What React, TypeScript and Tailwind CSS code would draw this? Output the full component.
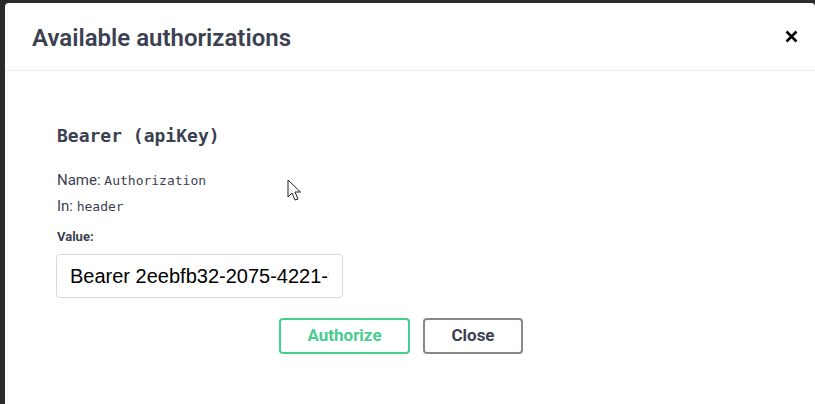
import React from "react";

const sans = "font-['Roboto','Noto_Sans',sans-serif]";
const mono = "font-['DejaVu_Sans_Mono','Liberation_Mono',monospace]";

const CloseIcon: React.FC = () => (
  <svg width="13" height="13" viewBox="0 0 13 13" aria-hidden="true">
    <path d="M1.5 1.5 L11.5 11.5 M11.5 1.5 L1.5 11.5" stroke="#000" strokeWidth="2.6" strokeLinecap="butt" />
  </svg>
);

const Cursor: React.FC = () => (
  <svg width="16" height="24" viewBox="0 0 16 24" aria-hidden="true">
    <path
      d="M1 1 L1 18 L5 14 L8 21 L11 20 L8 13 L13.5 13 Z"
      fill="#fff"
      stroke="#222"
      strokeWidth="1"
      strokeLinejoin="miter"
    />
  </svg>
);

export default function App() {
  return (
    <div className="w-[815px] h-[404px] bg-[#2b2b2b] pl-[5px] pt-[3px] overflow-hidden">
      <div className={`relative w-[810px] h-[410px] bg-white rounded-[4px] flex flex-col ${sans}`}>
        <div className="h-[68px] shrink-0 border-b border-[#ebebeb] flex items-center justify-between pl-[27px] pr-[17px]">
          <h3 className="text-[24px] font-semibold text-[#3b4151] leading-none mt-[2px]">
            Available authorizations
          </h3>
          <button type="button" className="w-[13px] h-[13px] flex items-center justify-center -mt-[1px]" aria-label="Close">
            <CloseIcon />
          </button>
        </div>

        <div className="flex flex-col pl-[52px] pr-[54px] pt-[53px]">
          <h4 className={`${mono} text-[18px] font-bold text-[#3b4151] leading-[24px]`}>
            Bearer (apiKey)
          </h4>
          <div className="mt-[22px] text-[15px] text-[#3b4151] leading-[20px] flex items-baseline">
            Name:&nbsp;<code className={`${mono} text-[13px]`}>Authorization</code>
          </div>
          <div className="mt-[5px] text-[15px] text-[#3b4151] leading-[20px] flex items-baseline">
            In:&nbsp;<code className={`${mono} text-[13px]`}>header</code>
          </div>
          <label className="mt-[12px] text-[13px] font-bold text-[#3b4151] leading-[16px]">Value:</label>
          <input
            type="text"
            readOnly
            value="Bearer 2eebfb32-2075-4221-9c1d-7f3a0b8e6d21"
            className="mt-[9px] -ml-[1px] w-[287px] h-[44px] border border-[#d9d9d9] rounded-[4px] px-[13px] text-[20px] text-black font-['Liberation_Sans',Arial,sans-serif] outline-none"
          />
          <div className="mt-[20px] flex justify-center gap-[13px]">
            <button
              type="button"
              className="shrink-0 w-[131px] h-[36px] border-2 border-[#49cc90] rounded-[4px] text-[#49cc90] text-[17px] font-bold"
            >
              Authorize
            </button>
            <button
              type="button"
              className="shrink-0 w-[100px] h-[36px] mr-4 border-2 border-[#888] rounded-[4px] text-[#3b4151] text-[17px] font-bold"
            >
              Close
            </button>
          </div>
        </div>

        <div className="absolute left-[282px] top-[176px]">
          <Cursor />
        </div>
      </div>
    </div>
  );
}
